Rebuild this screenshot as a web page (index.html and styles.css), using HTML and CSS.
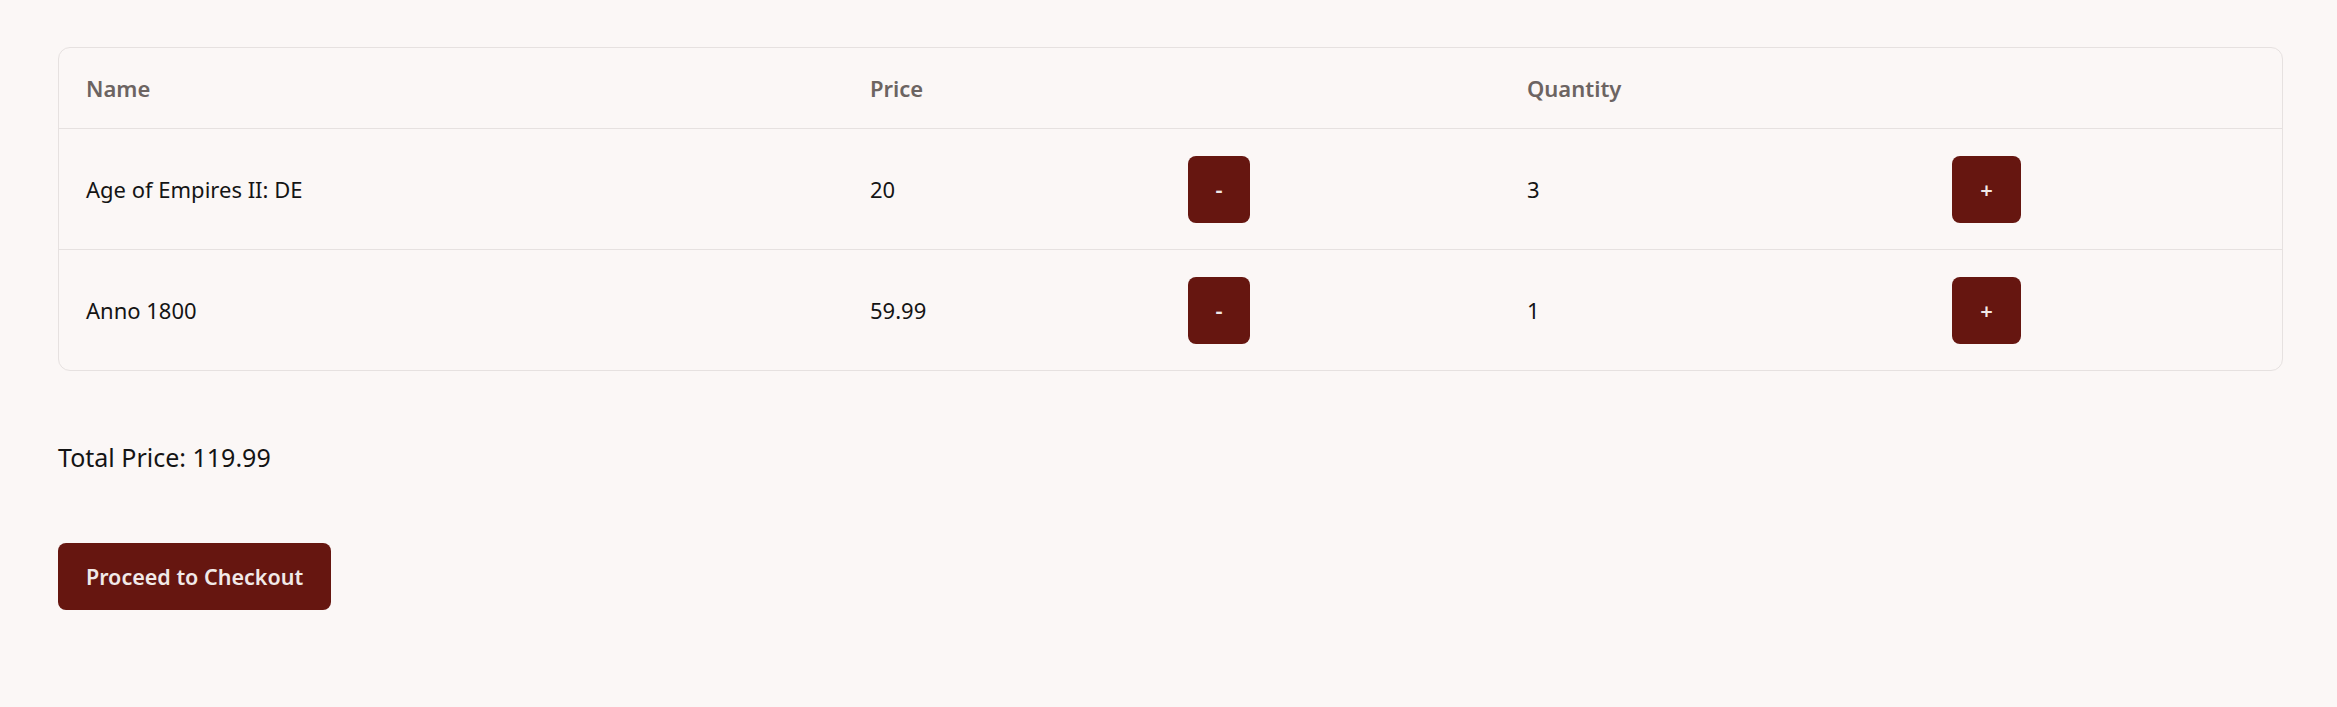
FILE: index.html
```html
<!DOCTYPE html>
<html lang="en">
<head>
<meta charset="utf-8">
<title>Cart</title>
<link rel="stylesheet" href="styles.css">
</head>
<body>
<main class="cart">
  <table class="cart-table">
    <colgroup>
      <col class="col-name">
      <col class="col-price">
      <col class="col-dec">
      <col class="col-qty">
      <col class="col-inc">
    </colgroup>
    <thead>
      <tr>
        <th>Name</th>
        <th>Price</th>
        <th></th>
        <th>Quantity</th>
        <th></th>
      </tr>
    </thead>
    <tbody>
      <tr>
        <td>Age of Empires II: DE</td>
        <td>20</td>
        <td><button class="qty-btn qty-btn--dec">-</button></td>
        <td>3</td>
        <td><button class="qty-btn qty-btn--inc">+</button></td>
      </tr>
      <tr>
        <td>Anno 1800</td>
        <td>59.99</td>
        <td><button class="qty-btn qty-btn--dec">-</button></td>
        <td>1</td>
        <td><button class="qty-btn qty-btn--inc">+</button></td>
      </tr>
    </tbody>
  </table>
  <p class="total">Total Price: 119.99</p>
  <button class="checkout-btn">Proceed to Checkout</button>
</main>
</body>
</html>
```
FILE: styles.css
```css
html, body {
  margin: 0;
  padding: 0;
  background: #fbf7f6;
}

body {
  font-family: "Noto Sans", "Open Sans", sans-serif;
  color: #141414;
}

.cart {
  padding: 47px 54px 40px 58px;
}

.cart-table {
  width: 100%;
  table-layout: fixed;
  border-collapse: separate;
  border-spacing: 0;
  border: 1px solid #e6e1e0;
  border-radius: 12px;
  font-size: 22px;
}

.col-name { width: 784px; }
.col-price { width: 318px; }
.col-dec { width: 339px; }
.col-qty { width: 425px; }
.col-inc { width: 357px; }

.cart-table th,
.cart-table td {
  text-align: left;
  padding: 0 27px;
  vertical-align: middle;
}

.cart-table th {
  height: 80px;
  font-weight: 600;
  color: #6c6462;
  border-bottom: 1px solid #e6e1e0;
}

.cart-table td {
  height: 120px;
  border-bottom: 1px solid #e6e1e0;
}

.cart-table tbody tr:last-child td {
  border-bottom: none;
}

.qty-btn {
  display: block;
  height: 67px;
  border: none;
  border-radius: 8px;
  background: #661610;
  color: #f1e9e8;
  font-family: "Noto Sans", sans-serif;
  font-size: 22px;
  font-weight: 600;
  padding: 0;
  cursor: pointer;
}

.qty-btn--dec { width: 62px; }
.qty-btn--inc { width: 69px; }

.total {
  margin: 69px 0 0;
  font-size: 25px;
}

.checkout-btn {
  display: block;
  margin-top: 69px;
  height: 67px;
  padding: 0 28px;
  border: none;
  border-radius: 8px;
  background: #661610;
  color: #f1e9e8;
  font-family: "Noto Sans", sans-serif;
  font-size: 21.5px;
  font-weight: 600;
  cursor: pointer;
}
```
